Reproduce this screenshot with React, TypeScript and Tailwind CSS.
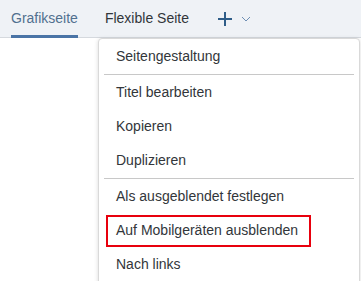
import { useState } from "react";

interface MenuEntry {
  label: string;
  separatorBefore?: boolean;
  highlighted?: boolean;
}

const menuEntries: MenuEntry[] = [
  { label: "Seitengestaltung" },
  { label: "Titel bearbeiten", separatorBefore: true },
  { label: "Kopieren" },
  { label: "Duplizieren" },
  { label: "Als ausgeblendet festlegen", separatorBefore: true },
  { label: "Auf Mobilgeräten ausblenden", highlighted: true },
  { label: "Nach links" },
];

const PlusIcon = () => (
  <svg width="16" height="16" viewBox="0 0 16 16" className="text-[#2f5d88]">
    <path d="M8 1v14M1 8h14" stroke="currentColor" strokeWidth="2" fill="none" />
  </svg>
);

const ChevronIcon = () => (
  <svg width="10" height="6" viewBox="0 0 10 6" className="text-[#6f8fb4]">
    <path d="M1 1l4 4 4-4" stroke="currentColor" strokeWidth="1" fill="none" />
  </svg>
);

const App = () => {
  const [activeTab] = useState("Grafikseite");
  const tabs = ["Grafikseite", "Flexible Seite"];

  return (
    <div
      className="relative w-[361px] h-[281px] bg-white overflow-hidden text-[14px] text-[#32363a]"
      style={{ fontFamily: '"Liberation Sans", Arial, sans-serif' }}
    >
      <div className="h-[38px] bg-[#eff2f6] border-b border-[#d5d9de] flex items-stretch pl-[11px]">
        {tabs.map((tab) => (
          <div key={tab} className="relative flex items-center mr-[27px]">
            <span className={tab === activeTab ? "text-[#51708f]" : "text-[#32363a]"}>{tab}</span>
            {tab === activeTab && (
              <div className="absolute left-0 right-0 bottom-[-1px] h-[3px] bg-[#4a74a6]" />
            )}
          </div>
        ))}
        <div className="flex items-center gap-[8px] ml-[1px]">
          <PlusIcon />
          <ChevronIcon />
        </div>
      </div>

      <div className="absolute left-[98px] top-[38px] w-[262px] h-[260px] bg-white border border-[#d9d9d9] rounded-[4px] shadow-[0_1px_4px_rgba(0,0,0,0.15)]">
        {menuEntries.map((entry) => (
          <div key={entry.label}>
            {entry.separatorBefore && <div className="mt-px h-px mx-[5px] bg-[#c8c8c8]" />}
            <div className="relative h-[34px] flex items-center pl-[17px]">
              {entry.label}
              {entry.highlighted && (
                <div className="absolute left-[7px] top-[2px] w-[205px] h-[32px] border-2 border-[#e8000d]" />
              )}
            </div>
          </div>
        ))}
      </div>
    </div>
  );
};

export default App;
